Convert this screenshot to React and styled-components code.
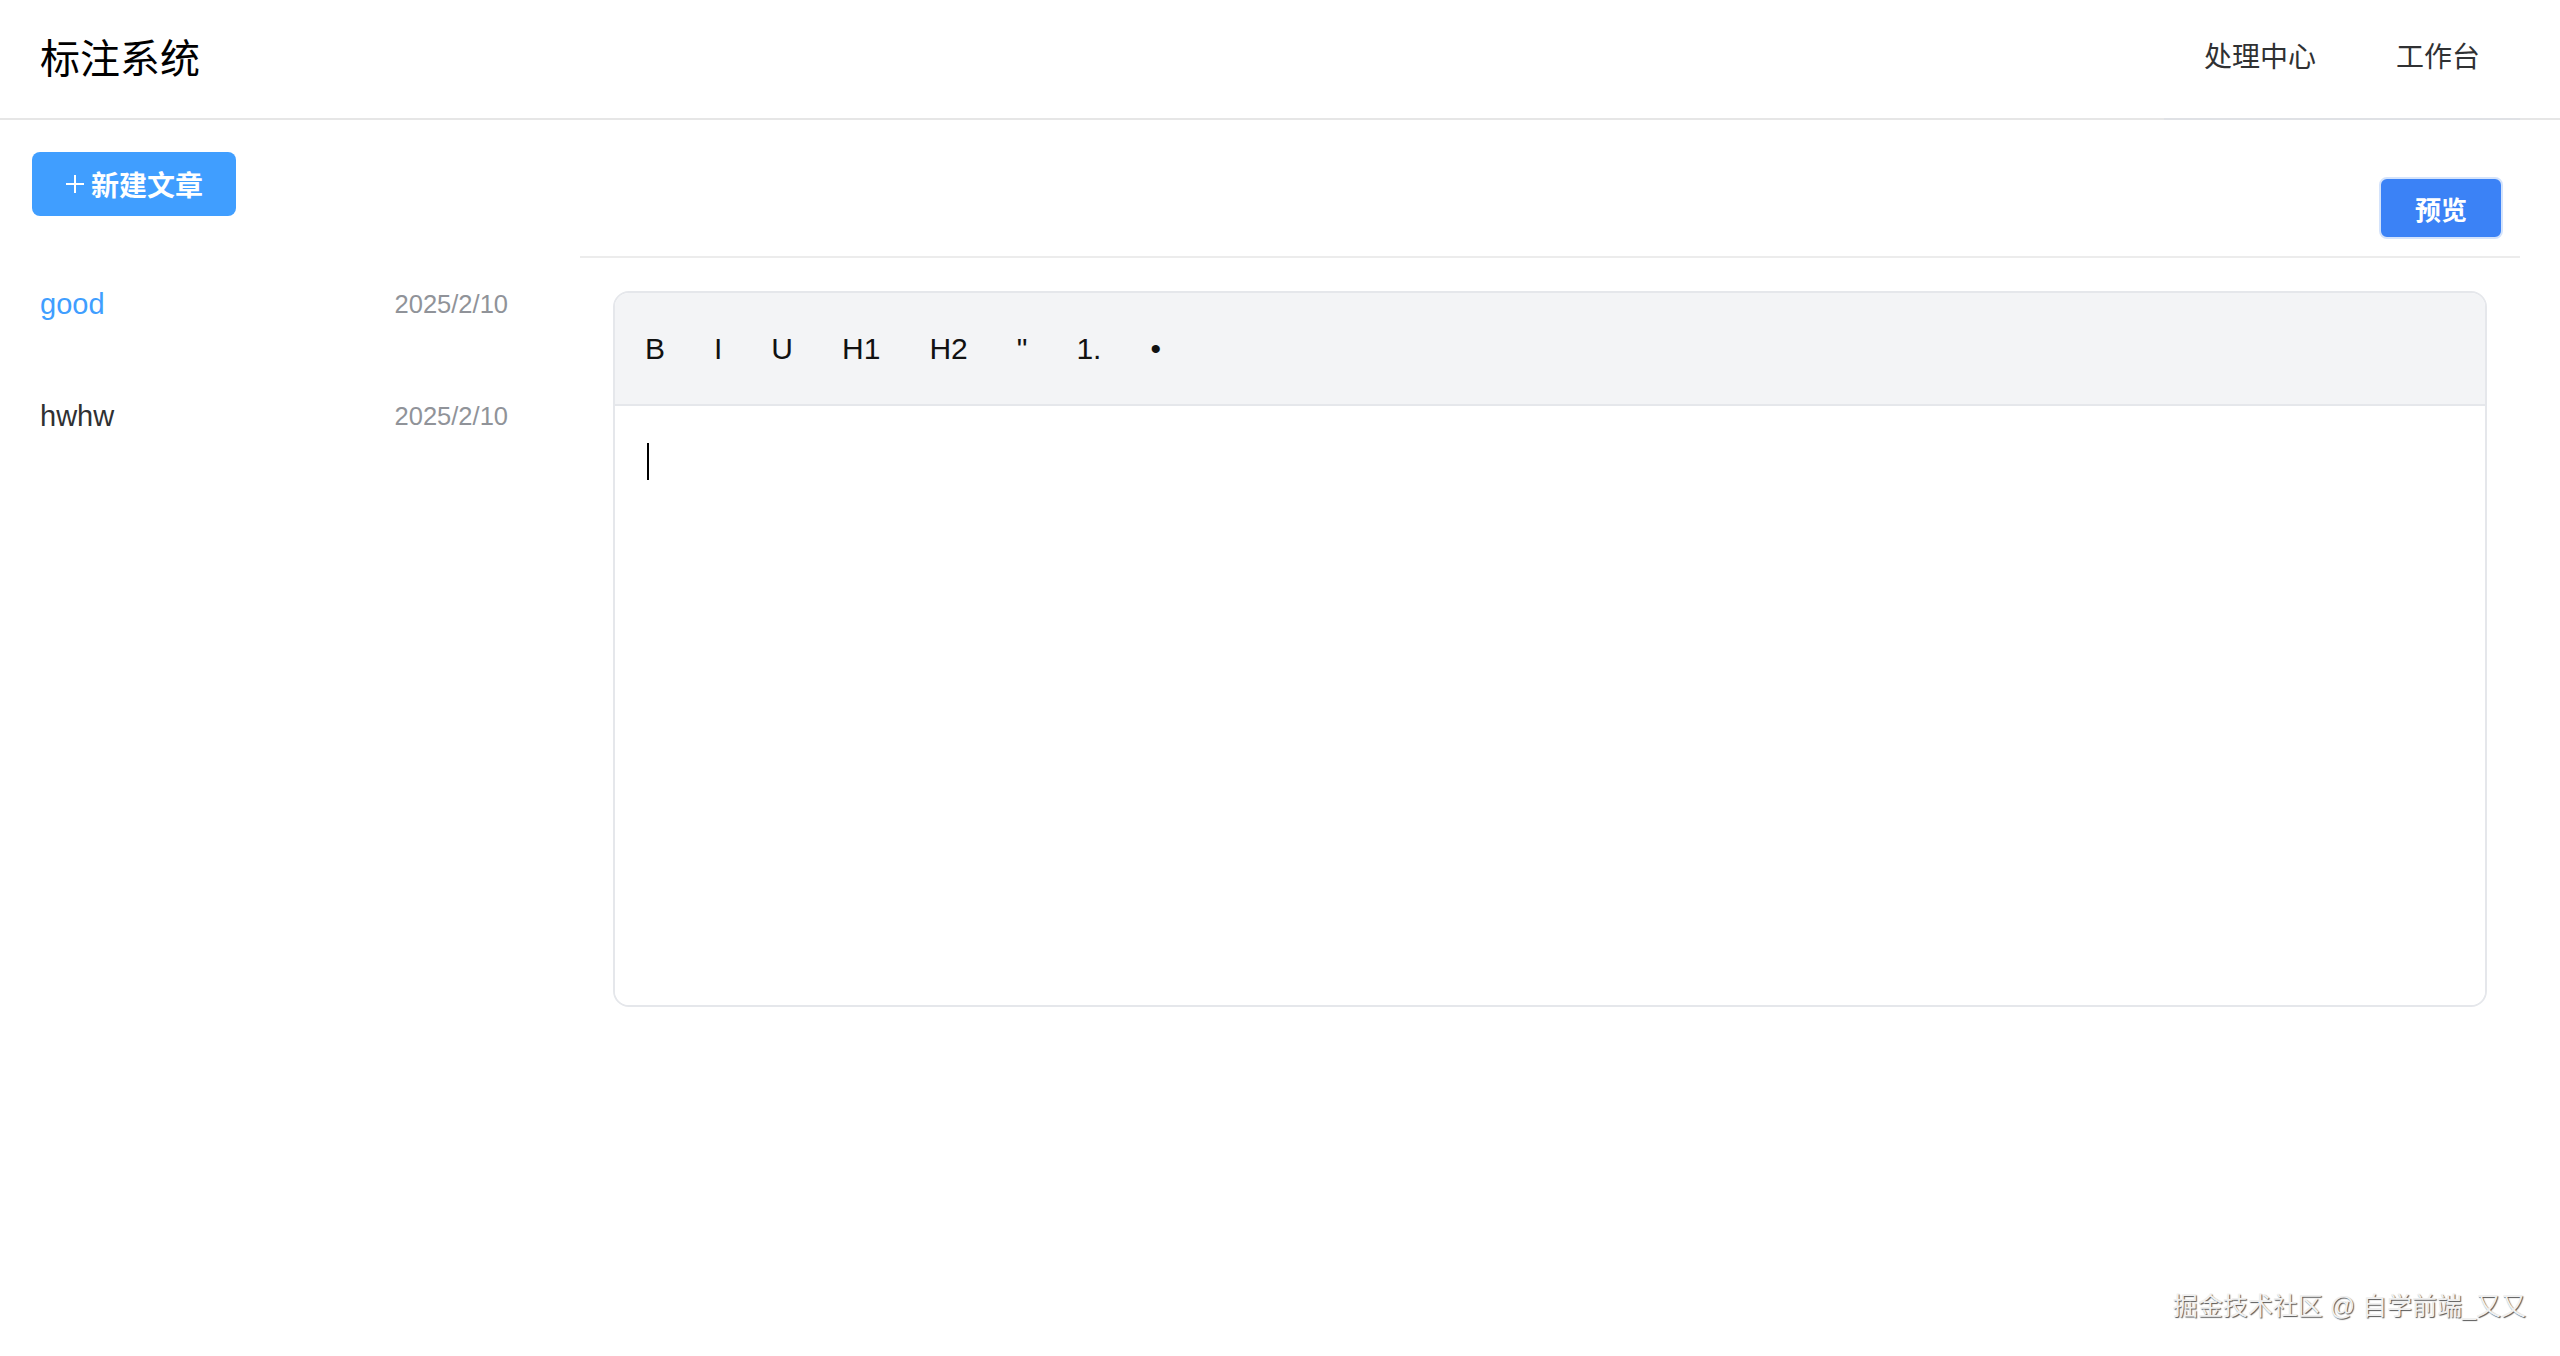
import React from "react";
import styled, { createGlobalStyle } from "styled-components";

const GlobalStyle = createGlobalStyle`
  html, body {
    margin: 0;
    padding: 0;
    background: #ffffff;
    font-family: "Liberation Sans", "Noto Sans CJK SC", sans-serif;
  }
  * { box-sizing: border-box; }
`;

const Page = styled.div`
  position: relative;
  min-height: 1356px;
  display: flex;
  flex-direction: column;
`;

const Header = styled.header`
  height: 120px;
  display: flex;
  align-items: stretch;
  justify-content: space-between;
  padding-left: 40px;
  border-bottom: 2px solid #e6e6e6;
`;

const Title = styled.h1`
  margin: 0 0 6px;
  align-self: center;
  font-size: 40px;
  font-weight: 400;
  color: #000;
`;

const Nav = styled.nav`
  display: flex;
  margin-right: 40px;
  margin-bottom: -2px;
  border-bottom: 2px solid #dfe1e5;
`;

const NavItem = styled.a`
  display: flex;
  align-items: center;
  padding: 0 40px 8px;
  font-size: 28px;
  color: #303133;
  text-decoration: none;
  cursor: pointer;
`;

const Body = styled.div`
  display: flex;
  flex: 1;
`;

const Sidebar = styled.aside`
  width: 580px;
  flex-shrink: 0;
  padding: 32px 64px 0 32px;
`;

const PrimaryButton = styled.button`
  display: inline-flex;
  align-items: center;
  justify-content: center;
  gap: 6px;
  width: 204px;
  height: 64px;
  border: none;
  border-radius: 8px;
  background: #409eff;
  color: #fff;
  font-family: inherit;
  font-size: 28px;
  font-weight: 700;
  cursor: pointer;
`;

const List = styled.ul`
  list-style: none;
  margin: 32px 0 0;
  padding: 0;
`;

const ListItem = styled.li`
  height: 112px;
  display: flex;
  align-items: center;
  justify-content: space-between;
  padding: 0 8px;
  cursor: pointer;
`;

const ItemTitle = styled.span`
  font-size: 29px;
  color: ${(p) => (p.$active ? "#409eff" : "#303133")};
`;

const ItemDate = styled.span`
  font-size: 25.5px;
  color: #909399;
`;

const Main = styled.main`
  flex: 1;
  margin-right: 40px;
  display: flex;
  flex-direction: column;
`;

const ActionBar = styled.div`
  display: flex;
  justify-content: flex-end;
  padding: 57px 17px 17px;
  border-bottom: 2px solid #ececec;
`;

const PreviewButton = styled.button`
  width: 124px;
  height: 62px;
  border: 2px solid #d4e3fb;
  border-radius: 8px;
  background: #3b82f6;
  color: #fff;
  font-family: inherit;
  font-size: 26px;
  font-weight: 700;
  cursor: pointer;
`;

const EditorCard = styled.section`
  margin: 33px 33px 0;
  height: 716px;
  border: 2px solid #e5e7eb;
  border-radius: 16px;
  overflow: hidden;
  display: flex;
  flex-direction: column;
`;

const Toolbar = styled.div`
  height: 113px;
  flex-shrink: 0;
  display: flex;
  align-items: center;
  gap: 33px;
  padding-left: 22px;
  background: #f3f4f6;
  border-bottom: 2px solid #e5e7eb;
`;

const ToolButton = styled.button`
  border: none;
  background: transparent;
  padding: 0 8px;
  font-family: "Liberation Sans", sans-serif;
  font-size: 30px;
  color: #111;
  cursor: pointer;
  line-height: 1;
`;

const EditorArea = styled.div`
  flex: 1;
  padding: 37px 32px;
  background: #fff;
`;

const Caret = styled.span`
  display: inline-block;
  width: 2px;
  height: 37px;
  background: #000;
`;

const Watermark = styled.div`
  position: absolute;
  right: 34px;
  bottom: 34px;
  font-size: 25px;
  color: #f0f0f0;
  text-shadow: 1px 1px 1px #555, -1px -1px 0 #fff;
  font-family: "Liberation Sans", "Noto Sans CJK SC", sans-serif;
`;

const PlusIcon = () => (
  <svg width="20" height="20" viewBox="0 0 20 20" fill="none">
    <path d="M10 1v18M1 10h18" stroke="#fff" strokeWidth="2" />
  </svg>
);

const articles = [
  { title: "good", date: "2025/2/10", active: true },
  { title: "hwhw", date: "2025/2/10", active: false },
];

const tools = ["B", "I", "U", "H1", "H2", '"', "1.", "•"];

export default function App() {
  return (
    <Page>
      <GlobalStyle />
      <Header>
        <Title>标注系统</Title>
        <Nav>
          <NavItem>处理中心</NavItem>
          <NavItem>工作台</NavItem>
        </Nav>
      </Header>
      <Body>
        <Sidebar>
          <PrimaryButton>
            <PlusIcon />
            新建文章
          </PrimaryButton>
          <List>
            {articles.map((a) => (
              <ListItem key={a.title}>
                <ItemTitle $active={a.active}>{a.title}</ItemTitle>
                <ItemDate>{a.date}</ItemDate>
              </ListItem>
            ))}
          </List>
        </Sidebar>
        <Main>
          <ActionBar>
            <PreviewButton>预览</PreviewButton>
          </ActionBar>
          <EditorCard>
            <Toolbar>
              {tools.map((t) => (
                <ToolButton key={t}>{t}</ToolButton>
              ))}
            </Toolbar>
            <EditorArea>
              <Caret />
            </EditorArea>
          </EditorCard>
        </Main>
      </Body>
      <Watermark>掘金技术社区 @ 自学前端_又又</Watermark>
    </Page>
  );
}
